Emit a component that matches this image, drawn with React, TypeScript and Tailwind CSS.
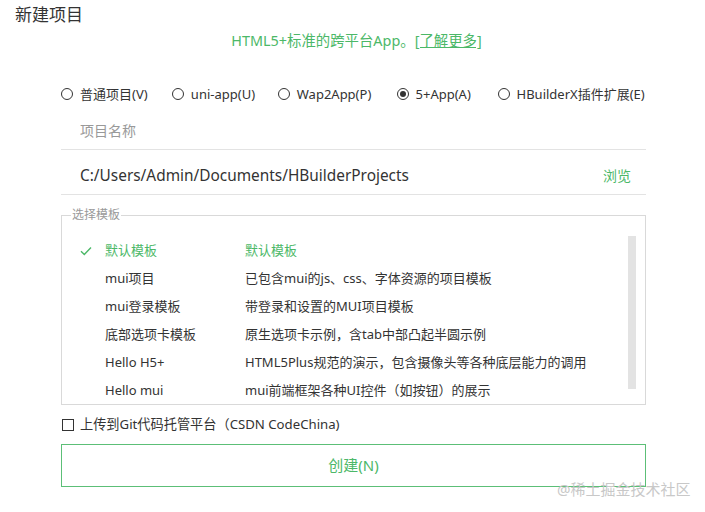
import React, { useState } from 'react';

const font = { fontFamily: '"Noto Sans", "Noto Sans CJK SC", sans-serif' };

const types = [
    { key: 'normal', label: '普通项目(V)', w: 'w-[112px]' },
    { key: 'uni', label: 'uni-app(U)', w: 'w-[107px]' },
    { key: 'wap', label: 'Wap2App(P)', w: 'w-[120px]' },
    { key: 'plus', label: '5+App(A)', w: 'w-[102px]' },
    { key: 'ext', label: 'HBuilderX插件扩展(E)', w: 'w-[150px]' },
];

const templates = [
    { name: '默认模板', desc: '默认模板' },
    { name: 'mui项目', desc: '已包含mui的js、css、字体资源的项目模板' },
    { name: 'mui登录模板', desc: '带登录和设置的MUI项目模板' },
    { name: '底部选项卡模板', desc: '原生选项卡示例，含tab中部凸起半圆示例' },
    { name: 'Hello H5+', desc: 'HTML5Plus规范的演示，包含摄像头等各种底层能力的调用' },
    { name: 'Hello mui', desc: 'mui前端框架各种UI控件（如按钮）的展示' },
];

export default function App() {
    const [type, setType] = useState('plus');
    const [selected, setSelected] = useState(0);
    const [git, setGit] = useState(false);

    return (
        <div className="w-[705px] h-[512px] bg-white relative overflow-hidden text-[#333]" style={font}>
            <div className="pl-[15px] pt-[2px] text-[17px] leading-[26px] text-[#333]">新建项目</div>

            <div className="w-[585px] ml-[61px]">
                <div className="mt-[4px] h-[18px] text-center text-[14.4px] leading-[18px] text-[#4cb868] pl-[6px]">
                    HTML5+标准的跨平台App。<span className="underline">[了解更多]</span>
                </div>

                {/* project type */}
                <div className="mt-[35px] flex items-center h-[18px]">
                    {types.map(t => (
                        <div key={t.key} className={`${t.w} flex items-center cursor-pointer`} onClick={() => setType(t.key)}>
                            <span className="w-[12px] h-[12px] rounded-full border border-[#333] flex items-center justify-center shrink-0">
                                {type === t.key && <span className="w-[6px] h-[6px] rounded-full bg-[#333]" />}
                            </span>
                            <span className="ml-[7px] text-[13px] leading-[18px] whitespace-nowrap">{t.label}</span>
                        </div>
                    ))}
                </div>

                {/* name */}
                <div className="mt-[9px] h-[38px] border-b border-[#e3e3e3] flex items-center pl-[19px]">
                    <input className="w-full outline-none text-[14px] placeholder-[#999] bg-transparent" placeholder="项目名称" style={font} />
                </div>

                {/* location */}
                <div className="h-[45px] border-b border-[#e3e3e3] flex items-center justify-between pl-[19px] pr-[15px] pt-[7px]">
                    <span className="text-[15.4px]">C:/Users/Admin/Documents/HBuilderProjects</span>
                    <span className="text-[14px] text-[#4cb868] cursor-pointer">浏览</span>
                </div>

                {/* templates */}
                <fieldset className="mt-[13px] h-[197px] border border-[#d9d9d9] px-[9px] pb-[14px] relative">
                    <legend className="text-[12px] text-[#999] px-[1px] leading-[14px]">选择模板</legend>
                    <div className="pt-[15px] flex flex-col">
                        {templates.map((t, i) => (
                            <div key={t.name} className={`h-[28px] flex items-center text-[13px] cursor-pointer ${selected === i ? 'text-[#4cb868]' : 'text-[#333]'}`} onClick={() => setSelected(i)}>
                                <span className="w-[34px] pl-[9px] text-[#4cb868]">
                                    {selected === i && (
                                        <svg width="12" height="10" viewBox="0 0 12 10" fill="none">
                                            <path d="M1 5.2 L4.3 8.4 L11 1.6" stroke="#4cb868" strokeWidth="1.4" />
                                        </svg>
                                    )}
                                </span>
                                <span className="w-[140px] whitespace-nowrap">{t.name}</span>
                                <span className="whitespace-nowrap">{t.desc}</span>
                            </div>
                        ))}
                    </div>
                    <div className="absolute right-[9px] top-[14px] w-[8px] h-[153px] bg-[#e3e3e3]" />
                </fieldset>

                {/* git */}
                <div className="mt-[11px] flex items-center h-[18px] cursor-pointer" onClick={() => setGit(!git)}>
                    <span className="w-[12px] h-[12px] border border-[#333] flex items-center justify-center ml-[1px]">
                        {git && <span className="w-[6px] h-[6px] bg-[#333]" />}
                    </span>
                    <span className="ml-[6px] text-[13.2px]">上传到Git代码托管平台（CSDN CodeChina)</span>
                </div>

                <div className="mt-[10px] w-full h-[43px] border border-solid border-[#5cbf77] text-[#4cb868] text-[15px] flex items-center justify-center cursor-pointer">
                    创建(N)
                </div>
            </div>

            <div className="absolute left-[557px] top-[478px] text-[15px] text-[#c8c8c8] whitespace-nowrap">@稀土掘金技术社区</div>
        </div>
    );
}
